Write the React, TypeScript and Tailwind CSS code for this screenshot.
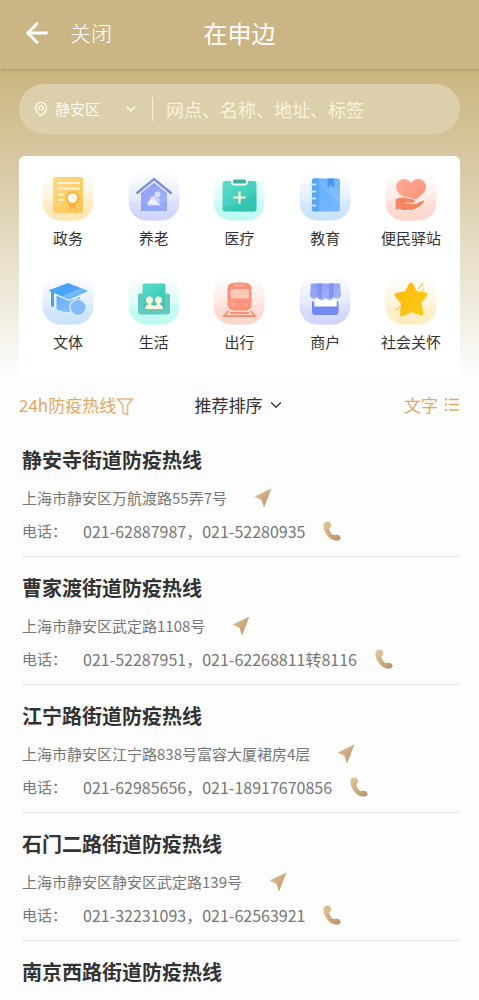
import { ReactNode, useId } from "react";
import { ArrowLeft, ChevronDown, MapPin } from "lucide-react";

type Tone = { from: string; to: string; tile: string };

const tones: Record<string, Tone> = {
    amber: { from: "#fddb83", to: "#fbc455", tile: "#fee6b4" },
    indigo: { from: "#8c9ef5", to: "#a4b4fb", tile: "#cdd5fd" },
    teal: { from: "#5cdccb", to: "#2fc4b2", tile: "#bbfaf1" },
    blue: { from: "#64b0fb", to: "#8cc4fd", tile: "#c8e1fe" },
    coral: { from: "#fdae99", to: "#fa8c70", tile: "#fdd5ca" },
    gold: { from: "#fcb80e", to: "#fdcb12", tile: "#feecc0" },
};

function Tile({ tone, children }: { tone: string; children: (fill: string) => ReactNode }) {
    const id = useId();
    const { from, to, tile } = tones[tone];
    return (
        <svg viewBox="0 0 52 50" className="h-[50px] w-[52px]" aria-hidden="true">
            <defs>
                <linearGradient id={`${id}t`} x1="0" y1="0" x2="0" y2="1">
                    <stop offset="0" stopColor={tile} stopOpacity="0" />
                    <stop offset="0.45" stopColor={tile} stopOpacity="0.4" />
                    <stop offset="1" stopColor={tile} />
                </linearGradient>
                <linearGradient id={`${id}f`} x1="0" y1="0" x2="1" y2="1">
                    <stop offset="0" stopColor={from} />
                    <stop offset="1" stopColor={to} />
                </linearGradient>
            </defs>
            <rect x="0.5" y="0" width="51" height="49.5" rx="18" fill={`url(#${id}t)`} />
            <path d="M1 31C15 29 22 39 33 34C41 30 45 28 51 29V31.5A18 18 0 0 1 33.500 49.500H18.500A18 18 0 0 1 1 31Z" fill={tile} opacity="0.35" />
            {children(`url(#${id}f)`)}
        </svg>
    );
}

const categories = [
    {
        label: "政务",
        icon: (
            <Tile tone="amber">
                {(fill) => (
                    <>
                        <rect x="11" y="6" width="30" height="36" rx="2" fill={fill} />
                        <path d="M16.5 12H37M16.5 17.5H37M16.5 23.500H21M16.5 29H21" stroke="#fff1cf" strokeWidth="2" strokeLinecap="round" />
                        <path d="M27 31V39L30.500 37L34 39V31Z" fill="#f9b344" />
                        <circle cx="30.500" cy="27" r="7" fill="#f9b63f" />
                        <circle cx="30.500" cy="27" r="4.800" fill="#fffae8" />
                    </>
                )}
            </Tile>
        ),
    },
    {
        label: "养老",
        icon: (
            <Tile tone="indigo">
                {(fill) => (
                    <>
                        <path d="M13 22L26 11.500L39 22V40H13Z" fill={fill} />
                        <path d="M8.500 22.500L26 8L43.500 22.500" fill="none" stroke="#7b8fe6" strokeWidth="2.500" />
                        <circle cx="29.500" cy="23.500" r="3" fill="#d9e0ff" />
                        <path d="M20.500 27L26 24.500L33 29L31.500 31L26 28.500Z" fill="#ccd6ff" />
                        <path d="M19 34.500C20 30 22 28 25 27L29 30.500C31 32 32 33 32.500 34.500Z" fill="#edf0ff" />
                        <path d="M13 33C22 31 26 38 39 30V40H13Z" fill="#7b90f2" opacity="0.25" />
                    </>
                )}
            </Tile>
        ),
    },
    {
        label: "医疗",
        icon: (
            <Tile tone="teal">
                {(fill) => (
                    <>
                        <rect x="9.500" y="10" width="34" height="30.500" rx="3" fill={fill} />
                        <path d="M9.500 36C20 38 26 31 32 27L43.500 21V37.500A3 3 0 0 1 40.500 40.500H12.500A3 3 0 0 1 9.500 37.500Z" fill="#24b8a5" opacity="0.3" />
                        <path d="M18 8H35V10.500A4 4 0 0 1 31 14.500H22A4 4 0 0 1 18 10.500Z" fill="#eefffc" />
                        <rect x="20" y="8.500" width="13" height="4" rx="1.500" fill="#3fb0a3" />
                        <path d="M26.500 20.500V32.500M20.500 26.500H32.500" stroke="#fff3cd" strokeWidth="2.200" />
                    </>
                )}
            </Tile>
        ),
    },
    {
        label: "教育",
        icon: (
            <Tile tone="blue">
                {(fill) => (
                    <>
                        <rect x="13" y="7.500" width="28" height="33" rx="2" fill={fill} />
                        <path d="M15 7.500H20V40.500H15A2 2 0 0 1 13 38.500V9.500A2 2 0 0 1 15 7.500Z" fill="#5aa6f6" />
                        <path d="M20 14L41 33V38.500A2 2 0 0 1 39 40.500H20Z" fill="#5dabfa" opacity="0.45" />
                        <path d="M28.500 7.500H35.500V17L32 14L28.500 17Z" fill="#4898ef" />
                        <path d="M12 13.500H16.500M12 20.500H16.500M12 27.500H16.500M12 34.500H16.500" stroke="#c6e2ff" strokeWidth="1.800" strokeLinecap="round" />
                    </>
                )}
            </Tile>
        ),
    },
    {
        label: "便民驿站",
        icon: (
            <Tile tone="coral">
                {(fill) => (
                    <>
                        <path d="M26 12C22.500 7 16 7 13 10.500C9.500 15 11.500 20 15 23.500L26 32L37 23.500C41 19.500 42.500 15 39 10.500C35.500 7 29.500 7 26 12Z" fill={fill} />
                        <path
                            d="M10 28.500C14 25.500 18 26 21 26.500C24 27.500 29 27 30 29C31 31 29 32.500 25.500 32.500L31 32.500C34 31.500 36 28.500 40 29.500C38 34 32 38.500 26 39.500H17L14 38L10 40Z"
                            fill="#f78463"
                            stroke="#fff1ec"
                            strokeWidth="1"
                        />
                        <path d="M20.500 32.800C23 31.500 26 32.800 29.500 32.500" fill="none" stroke="#fee5dd" strokeWidth="1" />
                    </>
                )}
            </Tile>
        ),
    },
    {
        label: "文体",
        icon: (
            <Tile tone="blue">
                {(fill) => (
                    <>
                        <path d="M14.500 20.500L27 26L38 22V27A9 9 0 0 0 28 37C23 37 18 36.500 14.500 34Z" fill={fill} />
                        <path d="M7.500 15.500L26 8.500L45 16L27 24Z" fill="#49a4f6" stroke="#49a4f6" strokeWidth="1" strokeLinejoin="round" />
                        <path d="M38 13.300L45 16L27 24L20 21.200Z" fill="#74b9fb" />
                        <path d="M10.500 16V31.500" stroke="#4d9eeb" strokeWidth="3" />
                        <circle cx="36" cy="32.500" r="8.800" fill="#e1efff" />
                        <circle cx="36" cy="32.500" r="7.500" fill="#86bafa" />
                    </>
                )}
            </Tile>
        ),
    },
    {
        label: "生活",
        icon: (
            <Tile tone="teal">
                {(fill) => (
                    <>
                        <rect x="14.500" y="8.500" width="23" height="24" rx="2" fill={fill} />
                        <path d="M10 20.500A2 2 0 0 1 12 18.500H15.500V30H36.500V18.500H40A2 2 0 0 1 42 20.500V36.500A3 3 0 0 1 39 39.500H13A3 3 0 0 1 10 36.500Z" fill="#5fcabd" />
                        <path d="M15.500 29H36.500V33H15.500Z" fill="#42bfb0" />
                        <circle cx="21.500" cy="25" r="3.500" fill="#fff6dc" />
                        <circle cx="30.500" cy="25" r="3.500" fill="#fff6dc" />
                        <path d="M20 27H23V29.500C25 30 26 31 26 32C26 31 27 30 29 29.500V27H32V29.500C34 30 35 31.500 35 34H17C17 31.500 18 30 20 29.500Z" fill="#fff6dc" />
                    </>
                )}
            </Tile>
        ),
    },
    {
        label: "出行",
        icon: (
            <Tile tone="coral">
                {(fill) => (
                    <>
                        <path d="M15.500 36L11 41H42L37.500 36M17 38H36" fill="none" stroke="#fa8d72" strokeWidth="1.800" />
                        <path d="M17 9C20 7 33 7 36 9Q38.500 10 38.500 13V29.500A6 6 0 0 1 32.500 35.500H20.500A6 6 0 0 1 14.500 29.500V13Q14.500 10 17 9Z" fill="#fa9077" />
                        <rect x="17.500" y="14" width="18.500" height="9.500" rx="2" fill="#fec8ba" />
                        <path d="M21 10.500H32" stroke="#fdb4a1" strokeWidth="1.500" strokeLinecap="round" />
                        <circle cx="20" cy="29.500" r="1.800" fill="#fdb09d" />
                        <circle cx="33" cy="29.500" r="1.800" fill="#fdb09d" />
                        <path d="M14.500 24H38.500V29.500A6 6 0 0 1 32.500 35.500H20.500A6 6 0 0 1 14.500 29.500Z" fill={fill} opacity="0.35" />
                    </>
                )}
            </Tile>
        ),
    },
    {
        label: "商户",
        icon: (
            <Tile tone="indigo">
                {(fill) => (
                    <>
                        <path d="M12 8.500H41L42 20A4 4 0 0 1 34.500 21.500A4 4 0 0 1 26.500 21.500A4 4 0 0 1 18.500 21.500A4 4 0 0 1 11 20Z" fill={fill} />
                        <path d="M18 8.500H23V23A4 4 0 0 1 18.500 21.500ZM30 8.500H35L34.500 21.500A4 4 0 0 1 30 23Z" fill="#7f93ef" />
                        <path d="M13 26.500H15.500V31H37.500V26.500H39.500V37A3 3 0 0 1 36.500 40H16A3 3 0 0 1 13 37Z" fill="#748bf3" />
                        <path d="M15.500 25.500L19 23.500L22.500 25.500L26.500 23.500L30.500 25.500L34 23.500L37.500 25.500V31.500H15.500Z" fill="#ffffff" />
                    </>
                )}
            </Tile>
        ),
    },
    {
        label: "社会关怀",
        icon: (
            <Tile tone="gold">
                {(fill) => (
                    <>
                        <path
                            d="M26 9.500L30.500 18L40.500 19.500L34.500 27L36.500 38.500L26.500 35L17 39.500L18 28L11.500 20L21.500 18Z"
                            fill={fill}
                            stroke={fill}
                            strokeWidth="4"
                            strokeLinejoin="round"
                        />
                        <path d="M33.500 13.500L38 8.500M37 16L39 14M11 35.500L14.500 32" stroke="#f2c968" strokeWidth="1.200" strokeLinecap="round" />
                    </>
                )}
            </Tile>
        ),
    },
];

const hotlines = [
    { name: "静安寺街道防疫热线", address: "上海市静安区万航渡路55弄7号", phone: "021-62887987，021-52280935" },
    { name: "曹家渡街道防疫热线", address: "上海市静安区武定路1108号", phone: "021-52287951，021-62268811转8116" },
    { name: "江宁路街道防疫热线", address: "上海市静安区江宁路838号富容大厦裙房4层", phone: "021-62985656，021-18917670856" },
    { name: "石门二路街道防疫热线", address: "上海市静安区静安区武定路139号", phone: "021-32231093，021-62563921" },
    { name: "南京西路街道防疫热线" },
];

function BronzeGradient({ id }: { id: string }) {
    return (
        <linearGradient id={id} x1="0" y1="0" x2="1" y2="1">
            <stop offset="0" stopColor="#e2ca98" />
            <stop offset="1" stopColor="#b98e66" />
        </linearGradient>
    );
}

function NavigateIcon() {
    const id = useId();
    return (
        <svg viewBox="0 0 18 20" className="h-5 w-[18px]" aria-hidden="true">
            <defs>
                <BronzeGradient id={id} />
            </defs>
            <path d="M0.500 8.500L17.500 0.500L10 19.500L7.500 12Z" fill={`url(#${id})`} />
        </svg>
    );
}

function CallIcon() {
    const id = useId();
    return (
        <svg viewBox="0 0 18 20" className="h-5 w-[18px]" aria-hidden="true">
            <defs>
                <BronzeGradient id={id} />
            </defs>
            <path
                d="M0.800 2.500C1.500 0.800 5 -0.200 6.800 1.200C8.500 3 8.200 5.500 6.500 7C5.800 8.500 8 12.500 10 13.800C11.500 14.300 12.500 13.300 14.500 13.800C17 14.500 18.200 16.500 17.300 18C16 20 12 20.200 9 18.500C4.500 16 1.500 11 0.600 7C0.300 5 0.200 3.500 0.800 2.500Z"
                fill={`url(#${id})`}
            />
        </svg>
    );
}

function Header() {
    return (
        <header className="relative z-10 flex h-[69px] items-center bg-[#cbb585] px-[21px] pb-1 text-white shadow-[0_1px_4px_rgba(130,105,50,0.4)]">
            <button aria-label="返回" className="relative z-10">
                <ArrowLeft className="size-8" strokeWidth={2.2} />
            </button>
            <button className="relative z-10 ml-[17px] text-[21px] font-light">关闭</button>
            <h1 className="absolute inset-x-0 text-center text-2xl">在申边</h1>
        </header>
    );
}

function SearchBar() {
    return (
        <div className="flex h-[50px] items-center rounded-full bg-[#dccfac] pr-6 pl-[14px] text-[#fffbed]">
            <button className="flex w-[106px] items-center text-[15px]">
                <MapPin className="mr-1.5 size-4" strokeWidth={2} />
                静安区
                <ChevronDown className="ml-auto size-4" strokeWidth={2} />
            </button>
            <div className="mx-[13px] h-6 w-px shrink-0 bg-[#f7f0dc]" />
            <input
                type="text"
                aria-label="搜索"
                placeholder="网点、名称、地址、标签"
                className="min-w-0 flex-1 bg-transparent text-lg outline-none placeholder:text-[#f9f2df]"
            />
        </div>
    );
}

function CategoryGrid() {
    return (
        <nav className="mt-[22px] grid grid-cols-5 gap-y-[27px] rounded-md bg-white px-1.5 pt-[15px] pb-6">
            {categories.map((category) => (
                <button key={category.label} className="flex flex-col items-center text-[15px] leading-5 whitespace-nowrap text-[#333333]">
                    {category.icon}
                    <span className="mt-[7px]">{category.label}</span>
                </button>
            ))}
        </nav>
    );
}

function FilterRow() {
    return (
        <div className="grid h-[52px] grid-cols-[1fr_auto_1fr] items-center px-[19px] pt-1.5 text-[17px] text-[#e8a660]">
            <button className="flex items-center justify-self-start">
                24h防疫热线
                <svg viewBox="0 0 18 20" className="mt-1 h-5 w-[18px]" fill="none" stroke="#f0b27e" strokeWidth="1.500" strokeLinejoin="round" aria-hidden="true">
                    <path d="M1.500 2H16.500L11.500 8V17.500L7 16V8Z" />
                </svg>
            </button>
            <button className="flex items-center gap-1 text-[#333333]">
                推荐排序
                <ChevronDown className="size-[18px]" strokeWidth={1.6} />
            </button>
            <button className="flex items-center gap-1.5 justify-self-end">
                文字
                <svg viewBox="0 0 16 16" className="size-4" stroke="#e8a660" strokeWidth="1.300" aria-hidden="true">
                    <path d="M1 2.500H3M1 7.500H3M1 13H3" strokeWidth="2" />
                    <path d="M5 2.500H15M5 7.500H15M5 13H15" />
                </svg>
            </button>
        </div>
    );
}

export default function App() {
    return (
        <div className="h-screen overflow-hidden bg-[#fdfdfd] font-['Noto_Sans_CJK_SC',sans-serif]">
            <Header />
            <div className="bg-linear-to-b from-[#cbb57f] via-[#dccfae] via-40% to-[#fdfdfd] px-[19px] pt-[15px]">
                <SearchBar />
                <CategoryGrid />
            </div>
            <FilterRow />
            <ul className="mt-px pr-[19px] pl-[22px]">
                {hotlines.map((item) => (
                    <li key={item.name} className="border-b border-[#e7e7e7] pt-[17px] pb-[13px] last:border-b-0">
                        <h2 className="text-xl leading-7 font-bold text-[#333333]">{item.name}</h2>
                        {item.address && (
                            <div className="mt-3 flex h-6 items-center gap-[27px] text-[15px] text-[#777777]">
                                {item.address}
                                <button aria-label="导航">
                                    <NavigateIcon />
                                </button>
                            </div>
                        )}
                        {item.phone && (
                            <div className="mt-[9px] flex h-6 items-center text-base text-[#777777]">
                                <span className="w-[61px] text-[15px]">电话：</span>
                                {item.phone}
                                <button aria-label="拨打电话" className="ml-[18px]">
                                    <CallIcon />
                                </button>
                            </div>
                        )}
                    </li>
                ))}
            </ul>
        </div>
    );
}
